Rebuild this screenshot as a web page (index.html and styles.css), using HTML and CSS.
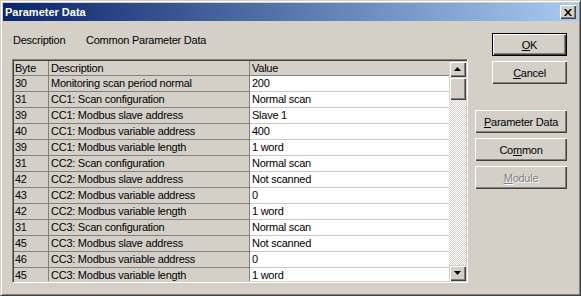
FILE: index.html
```html
<!DOCTYPE html>
<html>
<head>
<meta charset="utf-8">
<link rel="stylesheet" href="styles.css">
</head>
<body>
<div class="window">
  <div class="titlebar">
    <span class="title">Parameter Data</span>
    <span class="close"><svg width="8" height="7" viewBox="0 0 8 7"><path d="M0 0h2l2 2.5L6 0h2L5 3.5 8 7H6L4 4.5 2 7H0l3-3.5z" fill="#000"/></svg></span>
  </div>
  <div class="content">
    <div class="left">
      <div class="labels">
        <span class="lbl-a">Description</span>
        <span class="lbl-b">Common Parameter Data</span>
      </div>
      <div class="grid-frame">
        <div class="grid">
          <div class="row head">
            <div class="c byte">Byte</div><div class="c desc">Description</div><div class="c val">Value</div>
          </div>
          <div class="row"><div class="c byte">30</div><div class="c desc">Monitoring scan period normal</div><div class="c val">200</div></div>
          <div class="row"><div class="c byte">31</div><div class="c desc">CC1: Scan configuration</div><div class="c val">Normal scan</div></div>
          <div class="row"><div class="c byte">39</div><div class="c desc">CC1: Modbus slave address</div><div class="c val">Slave 1</div></div>
          <div class="row"><div class="c byte">40</div><div class="c desc">CC1: Modbus variable address</div><div class="c val">400</div></div>
          <div class="row"><div class="c byte">39</div><div class="c desc">CC1: Modbus variable length</div><div class="c val">1 word</div></div>
          <div class="row"><div class="c byte">31</div><div class="c desc">CC2: Scan configuration</div><div class="c val">Normal scan</div></div>
          <div class="row"><div class="c byte">42</div><div class="c desc">CC2: Modbus slave address</div><div class="c val">Not scanned</div></div>
          <div class="row"><div class="c byte">43</div><div class="c desc">CC2: Modbus variable address</div><div class="c val">0</div></div>
          <div class="row"><div class="c byte">42</div><div class="c desc">CC2: Modbus variable length</div><div class="c val">1 word</div></div>
          <div class="row"><div class="c byte">31</div><div class="c desc">CC3: Scan configuration</div><div class="c val">Normal scan</div></div>
          <div class="row"><div class="c byte">45</div><div class="c desc">CC3: Modbus slave address</div><div class="c val">Not scanned</div></div>
          <div class="row"><div class="c byte">46</div><div class="c desc">CC3: Modbus variable address</div><div class="c val">0</div></div>
          <div class="row"><div class="c byte">45</div><div class="c desc">CC3: Modbus variable length</div><div class="c val">1 word</div></div>
        </div>
        <div class="vscroll">
          <div class="sbtn"><svg width="7" height="4" viewBox="0 0 7 4"><path d="M3.5 0L7 4H0z" fill="#000"/></svg></div>
          <div class="thumb"></div>
          <div class="track"></div>
          <div class="sbtn"><svg width="7" height="4" viewBox="0 0 7 4"><path d="M0 0h7L3.5 4z" fill="#000"/></svg></div>
        </div>
      </div>
    </div>
    <div class="right">
      <div class="btn default narrow"><span><u>O</u>K</span></div>
      <div class="btn narrow"><span><u>C</u>ancel</span></div>
      <div class="spacer"></div>
      <div class="btn"><span><u>P</u>arameter Data</span></div>
      <div class="btn"><span>Co<u>m</u>mon</span></div>
      <div class="btn disabled"><span><u>M</u>odule</span></div>
    </div>
  </div>
</div>
</body>
</html>
```
FILE: styles.css
```css
html, body {
  margin: 0;
  padding: 0;
  background: #d4d0c8;
}
body {
  font-family: "Liberation Sans", Arial, sans-serif;
  font-size: 11px;
  letter-spacing: -0.25px;
  color: #000;
}
.window {
  width: 581px;
  height: 296px;
  box-sizing: border-box;
  border: 1px solid;
  border-color: #d4d0c8 #404040 #404040 #d4d0c8;
  box-shadow: inset 1px 1px #fff, inset -1px -1px #808080;
  padding: 2px;
  background: #d4d0c8;
  display: flex;
  flex-direction: column;
  overflow: hidden;
}
.titlebar {
  height: 18px;
  flex: none;
  background: linear-gradient(to right, #0a246a, #a6caf0);
  display: flex;
  align-items: center;
  justify-content: space-between;
}
.title {
  color: #fff;
  font-weight: bold;
  font-size: 11px;
  letter-spacing: 0;
  padding-left: 2px;
}
.close {
  width: 16px;
  height: 14px;
  margin-right: 2px;
  box-sizing: border-box;
  background: #d4d0c8;
  box-shadow: inset 1px 1px #fff, inset -1px -1px #404040, inset -2px -2px #808080;
  display: flex;
  align-items: center;
  justify-content: center;
}
.content {
  display: flex;
  justify-content: space-between;
  flex: 1;
}
.left {
  padding-left: 9px;
}
.labels {
  margin-top: 13px;
  margin-bottom: 12px;
  height: 13px;
  line-height: 13px;
  display: flex;
  padding-left: 1px;
}
.lbl-a { width: 73px; }
.grid-frame {
  width: 456px;
  height: 224px;
  box-sizing: border-box;
  border: 1px solid;
  border-color: #808080 #fff #fff #808080;
  box-shadow: inset 1px 1px #404040, inset -1px -1px #d4d0c8;
  padding: 1px;
  display: flex;
  overflow: hidden;
}
.grid {
  width: 435px;
  height: 220px;
  overflow: hidden;
  flex: none;
}
.row {
  display: flex;
  height: 16px;
}
.row.head { height: 15px; }
.c {
  box-sizing: border-box;
  height: 100%;
  white-space: nowrap;
  overflow: hidden;
  line-height: 15px;
  padding-left: 2px;
}
.byte {
  width: 35px;
  padding-left: 1px;
  background: #d4d0c8;
  border-right: 1px solid #808080;
  border-bottom: 1px solid #808080;
}
.desc {
  width: 201px;
  background: #d4d0c8;
  border-right: 1px solid #808080;
  border-bottom: 1px solid #808080;
}
.val {
  width: 199px;
  background: #fff;
  border-bottom: 1px solid #c8c8c8;
}
.head .c { line-height: 14px; }
.head .val {
  background: #d4d0c8;
  border-bottom: 1px solid #808080;
}
.vscroll {
  width: 17px;
  height: 220px;
  display: flex;
  flex-direction: column;
  flex: none;
}
.sbtn, .thumb {
  box-sizing: border-box;
  background: #d4d0c8;
  box-shadow: inset 1px 1px #d4d0c8, inset 2px 2px #fff, inset -1px -1px #404040, inset -2px -2px #808080;
}
.sbtn {
  height: 16px;
  display: flex;
  align-items: center;
  justify-content: center;
  flex: none;
}
.thumb {
  height: 23px;
  flex: none;
}
.track {
  flex: 1;
  background: repeating-conic-gradient(#fff 0 25%, #d4d0c8 0 50%) 0 0 / 2px 2px;
}
.right {
  width: 92px;
  margin-right: 11px;
  padding-top: 12px;
  display: flex;
  flex-direction: column;
  align-items: flex-end;
}
.btn {
  width: 92px;
  height: 23px;
  box-sizing: border-box;
  background: #d4d0c8;
  box-shadow: inset 1px 1px #fff, inset -1px -1px #404040, inset -2px -2px #808080;
  display: flex;
  align-items: center;
  justify-content: center;
  margin-bottom: 5px;
}
.btn.narrow { width: 75px; }
.btn.default {
  border: 1px solid #000;
  box-shadow: inset 1px 1px #fff, inset -1px -1px #404040, inset -2px -2px #808080;
}
.spacer { height: 21px; }
.btn.disabled {
  color: #808080;
  text-shadow: 1px 1px #fff;
}
```
